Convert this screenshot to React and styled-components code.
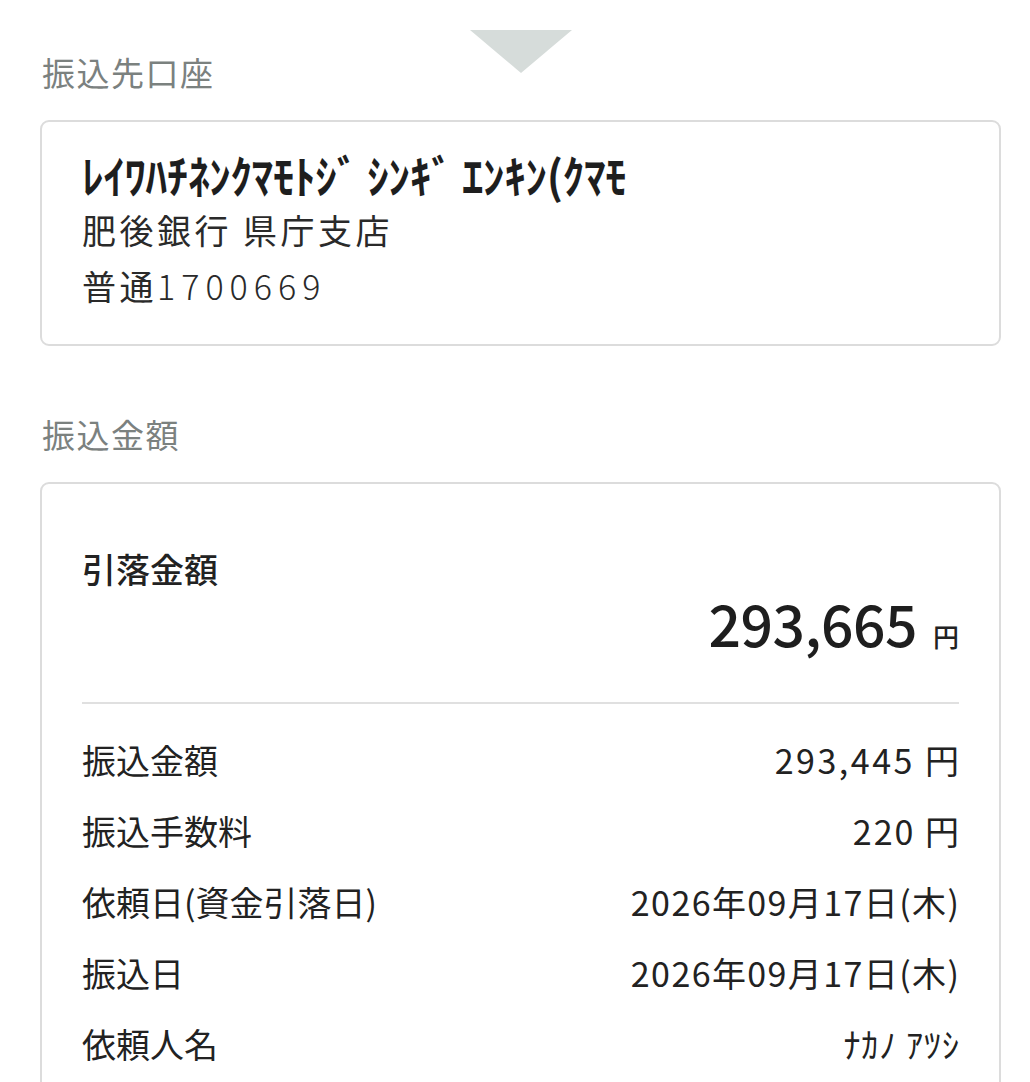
import styled, { createGlobalStyle } from 'styled-components';

const GlobalStyle = createGlobalStyle`
	html,
	body {
		margin: 0;
		padding: 0;
		background: #fff;
	}

	body {
		font-family: 'Noto Sans CJK JP', 'Noto Sans', sans-serif;
		color: #222;
	}
`;

const Page = styled.div`
	width: 961px;
	padding: 30px 29px 0 40px;
	height: 1052px;
	overflow: hidden;
`;

const SectionHead = styled.div`
	display: grid;
	margin-top: ${({ $top }) => $top || 0}px;
	margin-bottom: 26px;

	> * {
		grid-area: 1 / 1;
	}
`;

const Arrow = styled.div`
	justify-self: center;
	align-self: start;
	width: 0;
	height: 0;
	border-left: 51px solid transparent;
	border-right: 51px solid transparent;
	border-top: 43px solid #d6dcda;
`;

const SectionLabel = styled.h2`
	justify-self: start;
	margin: ${({ $offset }) => $offset || 0}px 0 0 2px;
	font-size: 33px;
	line-height: 44px;
	font-weight: 400;
	color: #7b817f;
	letter-spacing: 1.5px;
`;

const Card = styled.div`
	border: 2px solid #dcdcdc;
	border-radius: 9px;
	background: #fff;
	padding: ${({ $pad }) => $pad};
`;

const KanaName = styled.div`
	font-size: 43px;
	line-height: 56px;
	font-weight: 700;
	color: #1e1e1e;
	letter-spacing: -0.3px;
	transform: scaleY(1.05);
	transform-origin: left center;
`;

const AccountLine = styled.div`
	font-size: 34px;
	line-height: 56px;
	color: #2a2a2a;
	letter-spacing: 3.5px;
`;

const Digits = styled.span`
	font-weight: 300;
	letter-spacing: 6px;
`;

const TotalTitle = styled.div`
	font-size: 34px;
	line-height: 40px;
	font-weight: 500;
	color: #222;
`;

const TotalRow = styled.div`
	display: flex;
	justify-content: flex-end;
	align-items: baseline;
	gap: 16px;
	line-height: 66px;
`;

const TotalAmount = styled.span`
	font-size: 57px;
	font-weight: 500;
	color: #1e1e1e;
	letter-spacing: -0.5px;
`;

const TotalYen = styled.span`
	font-size: 26px;
	font-weight: 500;
`;

const Divider = styled.hr`
	margin: 33px 0 20px;
	border: 0;
	border-top: 2px solid #e0e0e0;
`;

const Row = styled.div`
	display: flex;
	justify-content: space-between;
	align-items: center;
	height: 71px;
	font-size: 34px;
	color: #222;
`;

const RowValue = styled.span`
	letter-spacing: ${({ $spacing }) => $spacing}px;
	margin-right: -${({ $spacing }) => $spacing}px;
`;

const rows = [
	{ label: '振込金額', value: '293,445 円', spacing: 2.5 },
	{ label: '振込手数料', value: '220 円', spacing: 2 },
	{ label: '依頼日(資金引落日)', value: '2026年09月17日(木)', spacing: 1.4 },
	{ label: '振込日', value: '2026年09月17日(木)', spacing: 1.4 },
	{ label: '依頼人名', value: 'ﾅｶﾉ ｱﾂｼ', spacing: 1 },
];

export default function App() {
	return (
		<>
			<GlobalStyle />
			<Page>
				<SectionHead>
					<Arrow />
					<SectionLabel $offset={20}>振込先口座</SectionLabel>
				</SectionHead>
				<Card $pad="24px 40px 30px 40px">
					<KanaName>ﾚｲﾜﾊﾁﾈﾝｸﾏﾓﾄｼﾞ ｼﾝｷﾞ ｴﾝｷﾝ(ｸﾏﾓ</KanaName>
					<AccountLine>肥後銀行 県庁支店</AccountLine>
					<AccountLine>
						普通<Digits>1700669</Digits>
					</AccountLine>
				</Card>

				<SectionHead $top={66}>
					<SectionLabel>振込金額</SectionLabel>
				</SectionHead>
				<Card $pad="65px 40px 60px 40px">
					<TotalTitle>引落金額</TotalTitle>
					<TotalRow>
						<TotalAmount>293,665</TotalAmount>
						<TotalYen>円</TotalYen>
					</TotalRow>
					<Divider />
					{rows.map((row) => (
						<Row key={row.label}>
							<span>{row.label}</span>
							<RowValue $spacing={row.spacing}>{row.value}</RowValue>
						</Row>
					))}
				</Card>
			</Page>
		</>
	);
}
